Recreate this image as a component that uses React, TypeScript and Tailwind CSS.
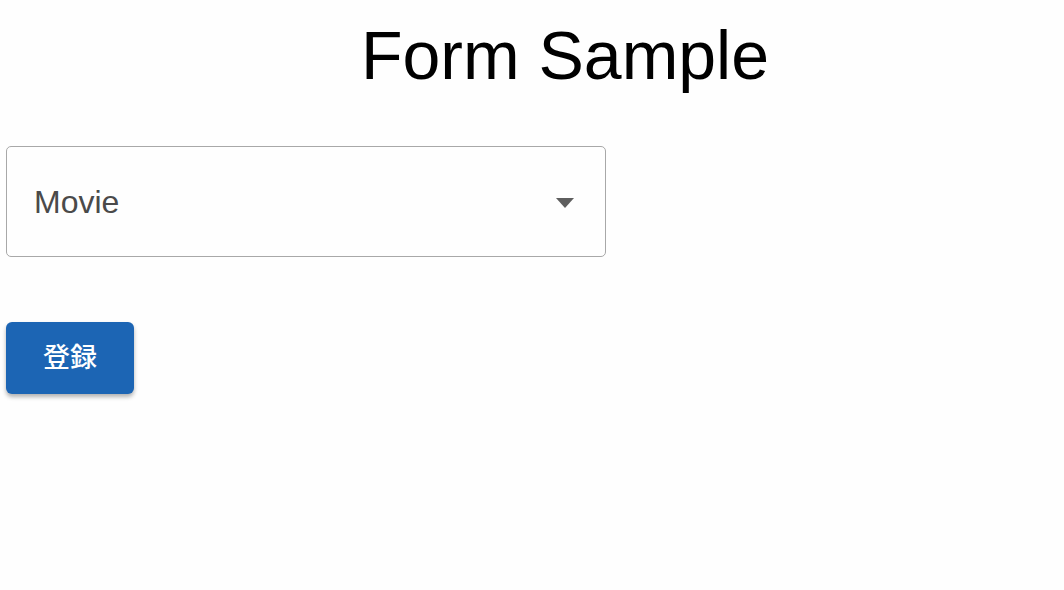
export default function App() {
  return (
    <div
      className="min-h-[590px] w-full bg-[#fefefe] text-black"
      style={{ fontFamily: '"Liberation Sans", Arial, "Noto Sans CJK JP", sans-serif' }}
    >
      <h1 className="pt-[16px] pl-[66px] text-center text-[68px] leading-[78px] font-normal">Form Sample</h1>

      <div className="mt-[52px] ml-[6px] flex h-[111px] w-[600px] items-center justify-between rounded-[5px] border border-[#a8a8a8] pl-[27px] pr-[31px]">
        <span className="text-[32px] leading-none text-[#4a4a4a]">Movie</span>
        <svg width="18" height="10" viewBox="0 0 18 10" className="mt-[2px]">
          <path d="M0 0h18L9 10z" fill="#5e5e5e" />
        </svg>
      </div>

      <div className="mt-[65px] ml-[6px]">
        <button className="flex h-[72px] w-[128px] items-center justify-center rounded-[6px] bg-[#1c65b4] text-[27px] font-medium text-white shadow-[0_3px_4px_rgba(0,0,0,0.3)]">
          登録
        </button>
      </div>
    </div>
  );
}
